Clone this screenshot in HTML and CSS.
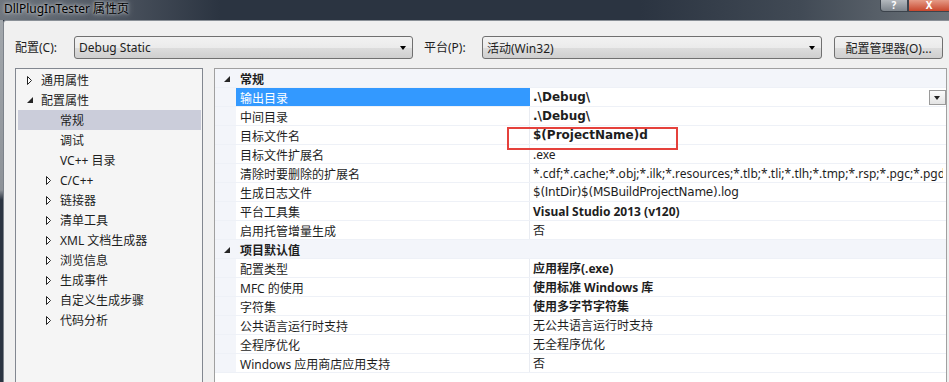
FILE: index.html
```html
<!DOCTYPE html>
<html lang="zh-CN">
<head>
    <meta charset="UTF-8">
    <title>DllPlugInTester 属性页</title>
    <link rel="stylesheet" href="styles.css">
</head>
<body>

<div class="titlebar">
    <span class="title">DllPlugInTester 属性页</span>
    <div class="caption-btns">
        <span class="cap-help">?</span>
        <span class="cap-close">X</span>
    </div>
</div>

<div class="frame">
    <div class="frame-edge"></div>
    <div class="client">
        <div class="config-row">
            <span class="lbl lbl-config">配置(C):</span>
            <div class="combo combo-config"><span>Debug Static</span><i class="arrow"></i></div>
            <span class="lbl lbl-platform">平台(P):</span>
            <div class="combo combo-platform"><span>活动(Win32)</span><i class="arrow"></i></div>
            <button class="btn-manager">配置管理器(O)...</button>
        </div>

        <div class="main">
            <ul class="tree">
                <li class="lvl1"><span class="tg"><svg width="6" height="9"><path d="M0.5 0.5 L4.5 4.5 L0.5 8.5 Z" fill="#fff" stroke="#222"/></svg></span>通用属性</li>
                <li class="lvl1"><span class="tg"><svg width="6" height="6"><path d="M6 0 L6 6 L0 6 Z" fill="#262626"/></svg></span>配置属性</li>
                <li class="lvl2 selected"><span class="tg"></span>常规</li>
                <li class="lvl2"><span class="tg"></span>调试</li>
                <li class="lvl2"><span class="tg"></span>VC++ 目录</li>
                <li class="lvl2"><span class="tg"><svg width="6" height="9"><path d="M0.5 0.5 L4.5 4.5 L0.5 8.5 Z" fill="#fff" stroke="#222"/></svg></span>C/C++</li>
                <li class="lvl2"><span class="tg"><svg width="6" height="9"><path d="M0.5 0.5 L4.5 4.5 L0.5 8.5 Z" fill="#fff" stroke="#222"/></svg></span>链接器</li>
                <li class="lvl2"><span class="tg"><svg width="6" height="9"><path d="M0.5 0.5 L4.5 4.5 L0.5 8.5 Z" fill="#fff" stroke="#222"/></svg></span>清单工具</li>
                <li class="lvl2"><span class="tg"><svg width="6" height="9"><path d="M0.5 0.5 L4.5 4.5 L0.5 8.5 Z" fill="#fff" stroke="#222"/></svg></span>XML 文档生成器</li>
                <li class="lvl2"><span class="tg"><svg width="6" height="9"><path d="M0.5 0.5 L4.5 4.5 L0.5 8.5 Z" fill="#fff" stroke="#222"/></svg></span>浏览信息</li>
                <li class="lvl2"><span class="tg"><svg width="6" height="9"><path d="M0.5 0.5 L4.5 4.5 L0.5 8.5 Z" fill="#fff" stroke="#222"/></svg></span>生成事件</li>
                <li class="lvl2"><span class="tg"><svg width="6" height="9"><path d="M0.5 0.5 L4.5 4.5 L0.5 8.5 Z" fill="#fff" stroke="#222"/></svg></span>自定义生成步骤</li>
                <li class="lvl2"><span class="tg"><svg width="6" height="9"><path d="M0.5 0.5 L4.5 4.5 L0.5 8.5 Z" fill="#fff" stroke="#222"/></svg></span>代码分析</li>
            </ul>

            <div class="grid">
                <div class="row header">
                    <span class="gutter"><svg width="6" height="6"><path d="M6 0 L6 6 L0 6 Z" fill="#262626"/></svg></span>
                    <span class="cat">常规</span>
                </div>
                <div class="row active">
                    <span class="gutter"></span>
                    <span class="name">输出目录</span>
                    <span class="value bold path">.\Debug\<i class="drop"></i></span>
                </div>
                <div class="row"><span class="gutter"></span><span class="name">中间目录</span><span class="value bold path">.\Debug\</span></div>
                <div class="row"><span class="gutter"></span><span class="name">目标文件名</span><span class="value bold path">$(ProjectName)d</span></div>
                <div class="row"><span class="gutter"></span><span class="name">目标文件扩展名</span><span class="value">.exe</span></div>
                <div class="row"><span class="gutter"></span><span class="name">清除时要删除的扩展名</span><span class="value"><span class="clip">*.cdf;*.cache;*.obj;*.ilk;*.resources;*.tlb;*.tli;*.tlh;*.tmp;*.rsp;*.pgc;*.pgd;*.meta;*.tlog;*.manifest;*.res;*.pch;*.exp;*.idb;*.rep;*.xdc;*.pdb;*_manifest.rc;*.bsc;*.sbr;*.xml</span></span></div>
                <div class="row"><span class="gutter"></span><span class="name">生成日志文件</span><span class="value path">$(IntDir)$(MSBuildProjectName).log</span></div>
                <div class="row"><span class="gutter"></span><span class="name">平台工具集</span><span class="value bold">Visual Studio 2013 (v120)</span></div>
                <div class="row"><span class="gutter"></span><span class="name">启用托管增量生成</span><span class="value">否</span></div>
                <div class="row header">
                    <span class="gutter"><svg width="6" height="6"><path d="M6 0 L6 6 L0 6 Z" fill="#262626"/></svg></span>
                    <span class="cat">项目默认值</span>
                </div>
                <div class="row"><span class="gutter"></span><span class="name">配置类型</span><span class="value bold">应用程序(.exe)</span></div>
                <div class="row"><span class="gutter"></span><span class="name">MFC 的使用</span><span class="value bold">使用标准 Windows 库</span></div>
                <div class="row"><span class="gutter"></span><span class="name">字符集</span><span class="value bold">使用多字节字符集</span></div>
                <div class="row"><span class="gutter"></span><span class="name">公共语言运行时支持</span><span class="value">无公共语言运行时支持</span></div>
                <div class="row"><span class="gutter"></span><span class="name">全程序优化</span><span class="value">无全程序优化</span></div>
                <div class="row"><span class="gutter"></span><span class="name">Windows 应用商店应用支持</span><span class="value">否</span></div>

                <div class="mark"></div>
            </div>
        </div>
    </div>
</div>

</body>
</html>
```

FILE: styles.css
```css
body { margin: 0; width: 949px; height: 382px; overflow: hidden; font-family: "Noto Sans", "Noto Sans CJK SC", sans-serif; font-size: 12px; color: #1e1e1e; background: #2b3441; }

/* title bar */
.titlebar { height: 20px; display: flex; justify-content: space-between; background: linear-gradient(90deg, #6f767e 0px, #4d5560 110px, #2b3441 220px, #2b3441 640px, #414a55 800px, #6b7279 949px); }
.title { padding-left: 4px; line-height: 17px; color: #000; text-shadow: 0 0 6px #c9ccd0, 0 0 3px #d8dadc; }
.caption-btns { display: flex; align-items: flex-start; }
.caption-btns span { height: 12px; line-height: 11px; text-align: center; color: #fff; font-weight: bold; font-size: 10px; border: 1px solid #3c434c; border-top: none; box-sizing: border-box; }
.cap-help { width: 28px; background: linear-gradient(#b3b8bd, #7d848b); border-radius: 0 0 0 4px; }
.cap-close { width: 41px; background: linear-gradient(#e59a86, #c8472d); border-right: none !important; }

/* window body */
.frame { display: flex; height: 362px; }
.frame-edge { width: 3px; background: linear-gradient(#a2a7ac 0px, #8d9298 170px, #2b3441 180px); }
.client { flex: 1; background: #f0f0f0; border-top: 1px solid #8a9097; border-left: 1px solid #7c828a; border-top-left-radius: 3px; padding-left: 11px; }

.config-row { display: flex; align-items: center; margin-top: 15px; height: 23px; }
.lbl { line-height: 23px; }
.lbl-config { width: 59px; }
.lbl-platform { width: 58px; margin-left: 11px; }
.combo { box-sizing: border-box; height: 23px; border: 1px solid #707070; border-radius: 3px; background: linear-gradient(#f2f2f2 0%, #ebebeb 50%, #dddddd 51%, #cfcfcf 100%); display: flex; align-items: center; justify-content: space-between; padding: 0 6px 0 4px; }
.combo-config { width: 339px; }
.combo-platform { width: 340px; }
.arrow { width: 0; height: 0; border-left: 3.5px solid transparent; border-right: 3.5px solid transparent; border-top: 4px solid #000; }
.btn-manager { box-sizing: border-box; width: 109px; height: 23px; margin-left: 12px; border: 1px solid #707070; border-radius: 3px; background: linear-gradient(#f2f2f2 0%, #ebebeb 50%, #dddddd 51%, #cfcfcf 100%); font: inherit; color: #1e1e1e; padding: 0; }

.main { display: flex; margin-top: 9px; }

/* tree */
.tree { list-style: none; margin: 0; padding: 1px 1px 0 1px; width: 184px; height: 320px; background: #f5f5f5; border: 1px solid #828790; }
.tree li { display: flex; align-items: center; height: 20px; white-space: nowrap; }
.tree .tg { width: 14px; display: flex; align-items: center; }
.tree .lvl1 { padding-left: 10px; }
.tree .lvl2 { padding-left: 29px; }
.tree .selected { background: #cbcdda; margin-left: 1px; padding-left: 28px; }

/* property grid */
.grid { position: relative; box-sizing: border-box; width: 733px; height: 330px; margin-left: 11px; background: #fff; border: 1px solid #a0a0a0; border-bottom: none; }
.row { display: flex; height: 18px; line-height: 21px; border-bottom: 1px solid #eef1f7; }
.gutter { width: 21px; flex: none; background: #f3f5fa; display: flex; align-items: center; justify-content: center; padding: 2px 0 0 2px; box-sizing: border-box; }
.name { width: 294px; flex: none; padding-left: 4px; box-sizing: border-box; border-right: 1px solid #e9ecf2; white-space: nowrap; }
.value { flex: 1; min-width: 0; padding-left: 3px; white-space: nowrap; overflow: hidden; display: flex; align-items: center; justify-content: space-between; }
.clip { overflow: hidden; max-width: 410px; }
.bold { font-weight: bold; }
.path { font-family: "DejaVu Sans", "Noto Sans CJK SC", sans-serif; letter-spacing: -0.25px; }
.path.bold { letter-spacing: 0; }
.header { background: #f3f5fa; }
.cat { padding-left: 4px; font-weight: bold; }
.active .name { background: #3399ff; color: #fff; border-right-color: #3399ff; }
.drop { width: 15px; height: 13px; flex: none; border: 1px solid #9a9a9a; background: linear-gradient(#fbfbfb, #e4e4e4); position: relative; }
.drop::after { content: ""; position: absolute; left: 4px; top: 5px; border-left: 3.5px solid transparent; border-right: 3.5px solid transparent; border-top: 4px solid #222; }

/* annotation */
.mark { position: absolute; left: 292px; top: 58px; width: 167px; height: 19px; border: 2px solid #e5413c; }
```
